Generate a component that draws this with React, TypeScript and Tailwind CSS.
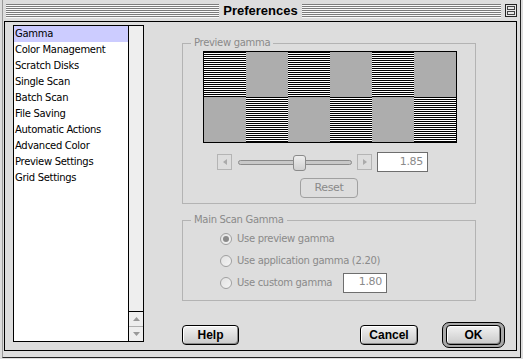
const items = [
  "Gamma",
  "Color Management",
  "Scratch Disks",
  "Single Scan",
  "Batch Scan",
  "File Saving",
  "Automatic Actions",
  "Advanced Color",
  "Preview Settings",
  "Grid Settings",
];

const geneva = "font-['DejaVu_Sans',sans-serif] tracking-[-0.3px]";
const charcoal = "font-['Liberation_Sans',Arial,sans-serif] font-bold";
const stripes = "bg-[repeating-linear-gradient(to_bottom,#000_0_1px,#fff_1px_2px)]";
const gray = "bg-[#adadad]";

function TitleStripes({ w }: { w: string }) {
  return (
    <div className={`${w} h-[14px] bg-[repeating-linear-gradient(to_bottom,#7c7c7c_0_1px,#fafafa_1px_2px)]`} />
  );
}

function Button({ label, w }: { label: string; w: string }) {
  return (
    <div
      className={`${w} h-[20px] flex items-center justify-center rounded-[4px] border border-black bg-gradient-to-b from-[#f2f2f2] to-[#cacaca] shadow-[inset_1px_1px_0_#fff,inset_-1px_-1px_0_#8a8a8a] text-[12px] text-black ${charcoal}`}
    >
      {label}
    </div>
  );
}

function ArrowBox({ dir }: { dir: "left" | "right" }) {
  return (
    <div className="w-[15px] h-[16px] border border-[#b4b4b4] flex items-center justify-center">
      <svg width="4" height="6" viewBox="0 0 4 6">
        {dir === "left" ? <path d="M4 0 L0 3 L4 6 Z" fill="#aaa" /> : <path d="M0 0 L4 3 L0 6 Z" fill="#aaa" />}
      </svg>
    </div>
  );
}

function Field({ value, w }: { value: string; w: string }) {
  return (
    <div className={`${w} h-[20px] bg-white border border-[#6e6e6e] flex items-center justify-end pr-[4px] text-[11px] text-[#8a8a8a] ${geneva}`}>
      {value}
    </div>
  );
}

function Radio({ on }: { on?: boolean }) {
  return (
    <div className="shrink-0 w-[12px] h-[12px] rounded-full border border-[#a0a0a0] bg-gradient-to-br from-[#e2e2e2] to-[#f4f4f4] flex items-center justify-center">
      {on && <div className="w-[6px] h-[6px] rounded-full bg-[#8a8a8a]" />}
    </div>
  );
}

function Group({ label, h, children }: { label: string; h: string; children: React.ReactNode }) {
  return (
    <div className={`relative w-[294px] ${h} border border-[#b3b3b3]`}>
      <span className={`absolute -top-[8px] left-[8px] px-[3px] bg-[#dddddd] leading-[14px] text-[10px] text-[#8a8a8a] ${geneva}`}>
        {label}
      </span>
      {children}
    </div>
  );
}

export default function App() {
  const topRow = [stripes, gray, stripes, gray, stripes, gray];
  const bottomRow = [gray, stripes, gray, stripes, gray, stripes];

  return (
    <div className="w-[523px] h-[359px] bg-[#dddddd] overflow-hidden">
      <div className="ml-[2px] w-[519px] h-[358px] border-l border-[#9a9a9a] border-r border-r-[#222] border-b border-b-[#222] flex flex-col">
        {/* title bar */}
        <div className="h-[21px] flex items-center pl-[3px] pr-[3px]">
          <TitleStripes w="w-[213px]" />
          <span className={`flex-1 text-center text-[13px] text-black leading-none ${charcoal}`}>Preferences</span>
          <TitleStripes w="w-[199px]" />
          <div className="ml-[4px] w-[12px] h-[13px] border border-[#222] bg-[#e6e6e6] flex flex-col p-[1px] gap-[1px]">
            <div className="flex-1 border border-[#444]" />
            <div className="flex-1 border border-[#444]" />
          </div>
        </div>

        {/* content frame */}
        <div className="ml-[1px] w-[513px] h-[330px] border border-black flex">
          {/* list */}
          <div className="ml-[8px] mt-[3px] w-[131px] h-[317px] border border-black bg-white flex">
            <div className={`w-[114px] text-[10px] text-black ${geneva}`}>
              {items.map((it, i) => (
                <div key={it} className={`h-[16px] pl-[1px] leading-[16px] whitespace-nowrap ${i === 0 ? "bg-[#ccccff]" : ""}`}>
                  {it}
                </div>
              ))}
            </div>
            <div className="w-[15px] border-l border-black flex flex-col bg-[#eeeeee]">
              <div className="flex-1" />
              <div className="h-[15px] border-t border-black flex items-center justify-center">
                <svg width="7" height="4" viewBox="0 0 7 4"><path d="M3.5 0 L7 4 L0 4 Z" fill="#999" /></svg>
              </div>
              <div className="h-[15px] border-t border-[#b0b0b0] flex items-center justify-center">
                <svg width="7" height="4" viewBox="0 0 7 4"><path d="M0 0 L7 0 L3.5 4 Z" fill="#999" /></svg>
              </div>
            </div>
          </div>

          {/* right pane */}
          <div className="ml-[38px] mt-[21px] w-[323px] flex flex-col">
            <Group label="Preview gamma" h="h-[161px]">
              <div className="ml-[20px] mt-[7px] w-[254px] h-[92px] border border-black grid grid-cols-6 grid-rows-2">
                {[...topRow, ...bottomRow].map((c, i) => (
                  <div key={i} className={c} />
                ))}
              </div>
              <div className="mt-[9px] h-[20px] flex items-center">
                <div className="ml-[34px]">
                  <ArrowBox dir="left" />
                </div>
                <div className="relative ml-[6px] w-[114px] h-[5px] rounded-full border border-[#8a8a8a] bg-[#c8c8c8]">
                  <div className="absolute left-[54px] -top-[6px] w-[13px] h-[16px] rounded-[3px] border border-[#8a8a8a] bg-gradient-to-b from-[#eeeeee] to-[#d0d0d0]" />
                </div>
                <div className="ml-[5px]">
                  <ArrowBox dir="right" />
                </div>
                <div className="ml-[5px]">
                  <Field value="1.85" w="w-[51px]" />
                </div>
              </div>
              <div className={`ml-[117px] mt-[6px] w-[58px] h-[20px] rounded-[4px] border border-[#a0a0a0] flex items-center justify-center text-[11px] text-[#8a8a8a] ${geneva}`}>
                Reset
              </div>
            </Group>

            <div className="mt-[16px]">
              <Group label="Main Scan Gamma" h="h-[81px]">
                <div className={`mt-[7px] flex flex-col gap-[1px] text-[10px] text-[#8a8a8a] whitespace-nowrap ${geneva}`}>
                  <div className="h-[21px] flex items-center pl-[37px]">
                    <Radio on />
                    <span className="ml-[5px]">Use preview gamma</span>
                  </div>
                  <div className="h-[21px] flex items-center pl-[37px]">
                    <Radio />
                    <span className="ml-[5px]">Use application gamma (2.20)</span>
                  </div>
                  <div className="h-[21px] flex items-center pl-[37px]">
                    <Radio />
                    <span className="ml-[5px] w-[101px] shrink-0">Use custom gamma</span>
                    <div className="ml-[5px]">
                      <Field value="1.80" w="w-[44px]" />
                    </div>
                  </div>
                </div>
              </Group>
            </div>

            <div className="mt-[21px] h-[26px] flex items-center">
              <Button label="Help" w="w-[57px]" />
              <div className="ml-[121px]">
                <Button label="Cancel" w="w-[58px]" />
              </div>
              <div className="ml-[24px] w-[63px] h-[26px] rounded-[7px] border border-black bg-[#a8a8a8] px-[3px] py-[2px]">
                <Button label="OK" w="w-full" />
              </div>
            </div>
          </div>
        </div>
      </div>
    </div>
  );
}
